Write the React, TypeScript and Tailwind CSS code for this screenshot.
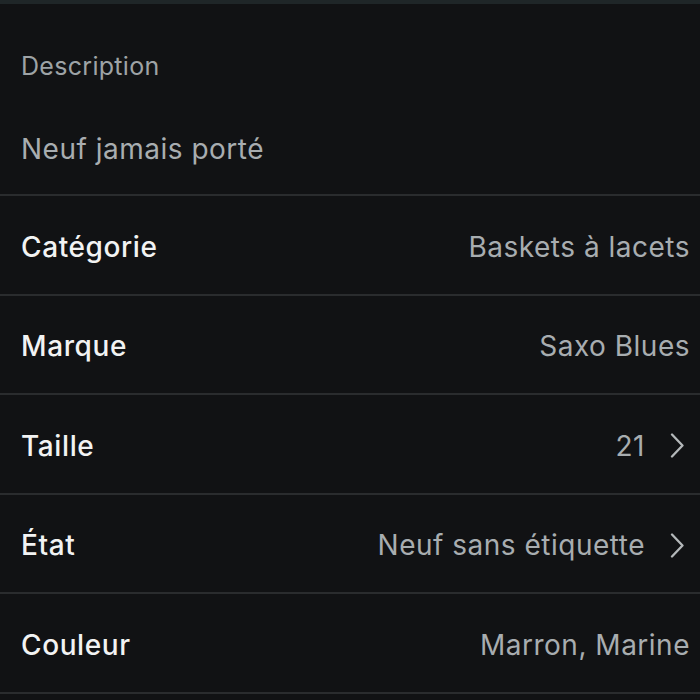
import { ReactNode } from "react";

interface Row {
  label: string;
  value: string;
  chevron?: boolean;
}

const rows: Row[] = [
  { label: "Catégorie", value: "Baskets à lacets" },
  { label: "Marque", value: "Saxo Blues" },
  { label: "Taille", value: "21", chevron: true },
  { label: "État", value: "Neuf sans étiquette", chevron: true },
  { label: "Couleur", value: "Marron, Marine" },
];

function Chevron() {
  return (
    <svg width="14" height="25" viewBox="0 0 14 25" fill="none" className="ml-[25px] mr-[6px]">
      <path d="M2 1.5 L12.5 12.5 L2 23.5" stroke="#b4b8ba" strokeWidth="2.3" strokeLinecap="round" strokeLinejoin="round" />
    </svg>
  );
}

function ItemRow({ children }: { children: ReactNode }) {
  return (
    <div className="h-[99.5px] pt-[4px] flex items-center justify-between pl-[21px] pr-[10px] border-b-2 border-[#2a2c2e]">
      {children}
    </div>
  );
}

export default function App() {
  return (
    <div className="w-[700px] h-[700px] overflow-hidden bg-[#111214] font-['Inter',sans-serif]">
      <div className="h-[4px] bg-[#1f2628]" />
      <div className="h-[192px] flex flex-col pl-[21px] border-b-2 border-[#2a2c2e]">
        <div className="mt-[46px] text-[25px] leading-[32px] tracking-[0.3px] text-[#9ea3a6]">Description</div>
        <div className="mt-[49px] text-[28px] leading-[36px] tracking-[0.5px] text-[#a8adb0]">Neuf jamais porté</div>
      </div>
      {rows.map((r) => (
        <ItemRow key={r.label}>
          <span className="text-[28px] font-medium tracking-[0.6px] text-[#f2f3f3]">{r.label}</span>
          <span className="flex items-center text-[28px] tracking-[0.5px] text-[#a8adb0]">
            {r.value}
            {r.chevron && <Chevron />}
          </span>
        </ItemRow>
      ))}
    </div>
  );
}
